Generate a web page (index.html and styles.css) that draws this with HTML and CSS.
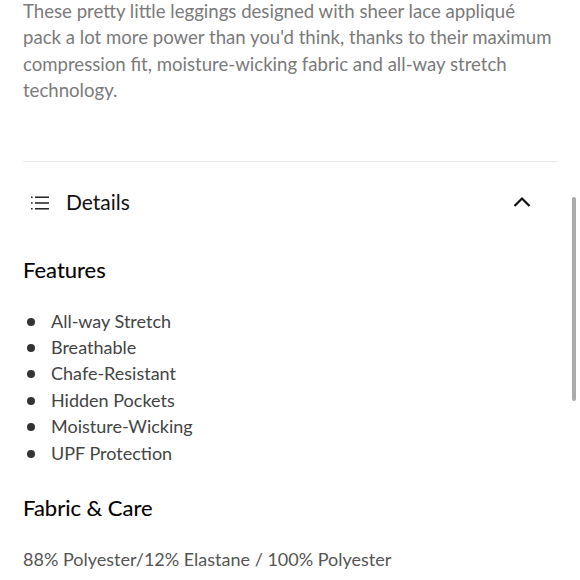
FILE: index.html
```html
<!DOCTYPE html>
<html>
<head>
<meta charset="utf-8">
<link rel="stylesheet" href="styles.css">
</head>
<body>
<main class="page">
  <p class="desc">These pretty little leggings designed with sheer lace appliqué pack a lot more power than you'd think, thanks to their maximum compression fit, moisture-wicking fabric and all-way stretch technology.</p>
  <hr class="divider">
  <div class="acc-head">
    <svg class="list-icon" width="18" height="16" viewBox="0 0 18 16">
      <g fill="#111">
        <rect x="0" y="2.5" width="1.6" height="1.4"/>
        <rect x="0" y="8.3" width="1.6" height="1.4"/>
        <rect x="0" y="14.1" width="1.6" height="1.4"/>
        <rect x="4" y="2.5" width="14" height="1.4"/>
        <rect x="4" y="8.3" width="14" height="1.4"/>
        <rect x="4" y="14.1" width="14" height="1.4"/>
      </g>
    </svg>
    <span class="acc-title">Details</span>
    <svg class="chev" width="18" height="12" viewBox="0 0 18 12">
      <path d="M1.5 10 L9 2.5 L16.5 10" fill="none" stroke="#111" stroke-width="2.2"/>
    </svg>
  </div>
  <h2 class="sec-title">Features</h2>
  <ul class="features">
    <li>All-way Stretch</li>
    <li>Breathable</li>
    <li>Chafe-Resistant</li>
    <li>Hidden Pockets</li>
    <li>Moisture-Wicking</li>
    <li>UPF Protection</li>
  </ul>
  <h2 class="sec-title fabric">Fabric &amp; Care</h2>
  <p class="fabric-text">88% Polyester/12% Elastane / 100% Polyester</p>
</main>
<div class="scrollbar"></div>
</body>
</html>
```
FILE: styles.css
```css
html, body {
  margin: 0;
  padding: 0;
  background: #fff;
}
body {
  font-family: "Lato", "Liberation Sans", sans-serif;
  overflow: hidden;
}
.page {
  padding: 0 23px;
}
.desc {
  margin: -2px 0 0;
  font-size: 18.6px;
  line-height: 26.4px;
  color: #7a7a7a;
}
.divider {
  border: 0;
  border-top: 1px solid #ececec;
  margin: 57px 0 0;
}
.acc-head {
  display: flex;
  align-items: center;
  height: 80px;
  padding: 0 26px 0 8px;
}
.list-icon {
  flex: none;
}
.acc-title {
  margin-left: 17px;
  font-size: 21px;
  color: #111;
  flex: 1;
}
.chev {
  flex: none;
}
.sec-title {
  margin: 0;
  font-size: 22px;
  font-weight: normal;
  color: #000;
  line-height: 28px;
  padding-top: 14px;
  -webkit-text-stroke: 0.12px #000;
}
.features {
  list-style: none;
  margin: 24px 0 0;
  padding: 0;
}
.features li {
  position: relative;
  padding-left: 28px;
  font-size: 18px;
  line-height: 26.4px;
  color: #444;
}
.features li::before {
  content: "";
  position: absolute;
  left: 4px;
  top: 10px;
  width: 8px;
  height: 8px;
  border-radius: 50%;
  background: #333;
}
.fabric {
  padding-top: 28px;
}
.fabric-text {
  margin: 24px 0 0;
  font-size: 18px;
  line-height: 26px;
  color: #555;
}
.scrollbar {
  position: absolute;
  left: 572px;
  top: 197px;
  width: 4px;
  height: 204px;
  border-radius: 2px;
  background: #aaa;
}
```
